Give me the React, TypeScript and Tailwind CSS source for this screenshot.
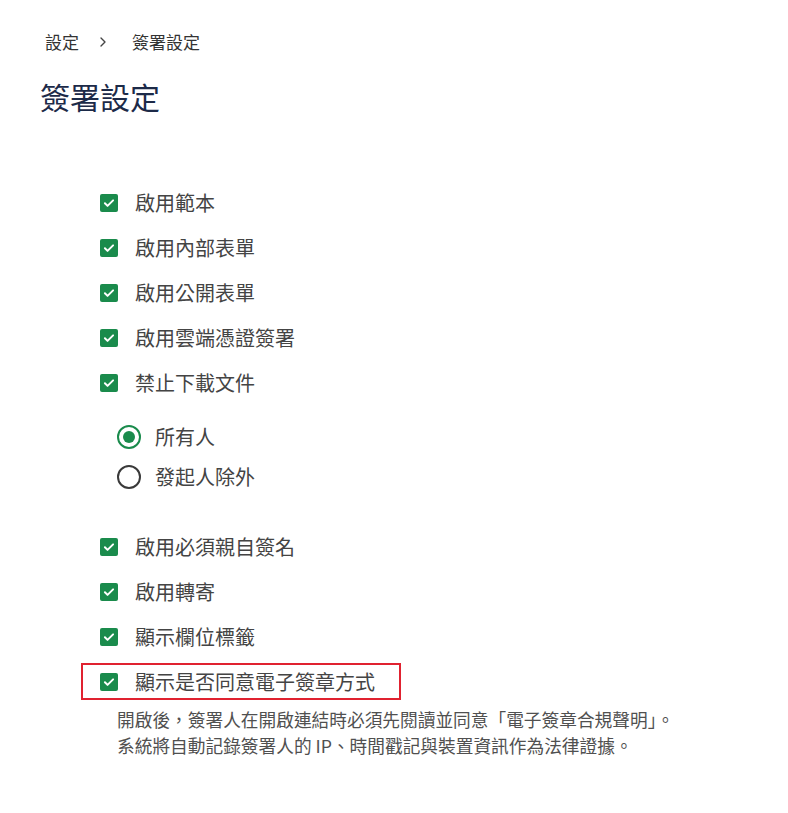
import { ChevronRight } from 'lucide-react';

const font = { fontFamily: '"Noto Sans CJK TC", "Noto Sans", sans-serif' };

function CheckBox() {
  return (
    <span className="flex h-[18px] w-[18px] shrink-0 items-center justify-center rounded-[2px] bg-[#1a8b4c]">
      <svg viewBox="0 0 24 24" className="h-[14px] w-[14px]" fill="none" stroke="white" strokeWidth="3.4" strokeLinecap="round" strokeLinejoin="round">
        <path d="M5 12.5l4.5 4.5L19 7.5" />
      </svg>
    </span>
  );
}

function Radio({ checked }: { checked: boolean }) {
  return (
    <span
      className={
        checked
          ? 'flex h-[24px] w-[24px] shrink-0 items-center justify-center rounded-full border-[2.5px] border-[#1a8b4c]'
          : 'flex h-[24px] w-[24px] shrink-0 items-center justify-center rounded-full border-[2.5px] border-[#3a3a3a]'
      }
    >
      {checked && <span className="h-[12px] w-[12px] rounded-full bg-[#1a8b4c]" />}
    </span>
  );
}

function CheckRow({ label }: { label: string }) {
  return (
    <div className="flex h-[45px] items-center gap-[17px] pl-[100px]">
      <CheckBox />
      <span className="text-[20px] leading-none text-[#444]">{label}</span>
    </div>
  );
}

function RadioRow({ label, checked }: { label: string; checked: boolean }) {
  return (
    <div className="flex h-[40px] items-center gap-[14px] pl-[117px]">
      <Radio checked={checked} />
      <span className="text-[20px] leading-none text-[#444]">{label}</span>
    </div>
  );
}

export default function App() {
  const top = ['啟用範本', '啟用內部表單', '啟用公開表單', '啟用雲端憑證簽署', '禁止下載文件'];
  const bottom = ['啟用必須親自簽名', '啟用轉寄', '顯示欄位標籤'];

  return (
    <div className="min-h-[813px] w-[788px] bg-white" style={font}>
      <nav className="flex items-center pl-[45px] pt-[31px] text-[17px] leading-[22px] text-[#333]">
        <span>設定</span>
        <ChevronRight className="ml-[16px] mr-[21px] h-[16px] w-[16px] text-[#444]" strokeWidth={2} />
        <span>簽署設定</span>
      </nav>
      <h1 className="pl-[40px] pt-[23px] text-[30px] leading-[40px] text-[#1c2a48]">簽署設定</h1>

      <div className="pt-[64px]">
        {top.map((label) => (
          <CheckRow key={label} label={label} />
        ))}

        <div className="pt-[12px]">
          <RadioRow label="所有人" checked />
          <RadioRow label="發起人除外" checked={false} />
        </div>

        <div className="pt-[27px]">
          {bottom.map((label) => (
            <CheckRow key={label} label={label} />
          ))}
          <div className="pl-[81px] pt-[4px]">
            <div className="inline-flex h-[37px] items-center gap-[17px] border-2 border-[#e02230] pl-[17px] pr-[24px]">
              <CheckBox />
              <span className="text-[20px] leading-none text-[#444]">顯示是否同意電子簽章方式</span>
            </div>
          </div>
          <div className="pl-[117px] pt-[6px] text-[17.7px] leading-[26px] text-[#505050]">
            <p>開啟後，簽署人在開啟連結時必須先閱讀並同意「電子簽章合規聲明」。</p>
            <p>系統將自動記錄簽署人的 IP、時間戳記與裝置資訊作為法律證據。</p>
          </div>
        </div>
      </div>
    </div>
  );
}
